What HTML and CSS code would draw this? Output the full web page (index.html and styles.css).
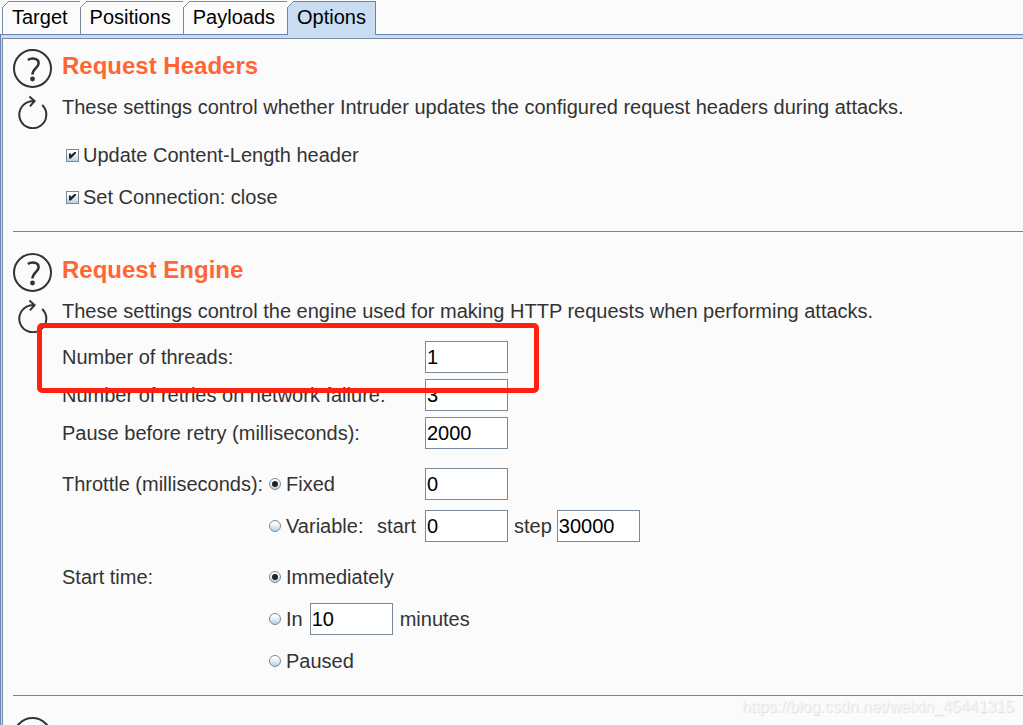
FILE: index.html
```html
<!DOCTYPE html>
<html lang="en">

<head>
    <meta charset="UTF-8">
    <meta name="viewport" content="width=device-width, initial-scale=1.0">
    <title>Intruder - Options</title>
    <link rel="stylesheet" href="styles.css">
</head>
<body>
<svg class="defs" aria-hidden="true">
    <symbol id="help" viewBox="0 0 39 39">
        <circle cx="19.5" cy="19.5" r="18.5"/>
        <path class="hook" d="M14.8 11C18 9 25.6 8.4 25.6 14.2C25.6 19 19.5 19.4 19.5 25.6"/>
        <circle class="dot" cx="19.5" cy="30" r="2.4"/>
    </symbol>
    <symbol id="reset" viewBox="0 0 30 34">
        <path d="M24.2 10A13.5 13.5 0 1 1 11.5 6.6L16 6"/>
        <path d="M11.4 1.4L16.6 6L12 11.4"/>
    </symbol>
</svg>

<nav class="tabs">
    <button type="button" class="tab">Target</button>
    <button type="button" class="tab">Positions</button>
    <button type="button" class="tab">Payloads</button>
    <button type="button" class="tab active">Options</button>
</nav>

<main class="panel">
    <section class="block">
        <div class="icons">
            <button type="button" class="icon" aria-label="Help"><svg class="help"><use href="#help"/></svg></button>
            <button type="button" class="icon" aria-label="Reset"><svg class="reset"><use href="#reset"/></svg></button>
        </div>
        <div class="content">
            <h2>Request Headers</h2>
            <p>These settings control whether Intruder updates the configured request headers during attacks.</p>
            <div class="checks">
                <label class="check"><input type="checkbox" checked>Update Content-Length header</label>
                <label class="check"><input type="checkbox" checked>Set Connection: close</label>
            </div>
        </div>
    </section>

    <section class="block">
        <div class="icons">
            <button type="button" class="icon" aria-label="Help"><svg class="help"><use href="#help"/></svg></button>
            <button type="button" class="icon" aria-label="Reset"><svg class="reset"><use href="#reset"/></svg></button>
        </div>
        <div class="content">
            <h2>Request Engine</h2>
            <p>These settings control the engine used for making HTTP requests when performing attacks.</p>
            <form class="engine">
                <div class="group tight">
                    <div class="row">
                        <label class="wide" for="threads">Number of threads:</label>
                        <input type="text" id="threads" value="1">
                    </div>
                    <div class="row">
                        <label class="wide" for="retries">Number of retries on network failure:</label>
                        <input type="text" id="retries" value="3">
                    </div>
                    <div class="row">
                        <label class="wide" for="pause">Pause before retry (milliseconds):</label>
                        <input type="text" id="pause" value="2000">
                    </div>
                </div>
                <div class="group">
                    <div class="row">
                        <span>Throttle (milliseconds):</span>
                        <label class="radio"><input type="radio" name="throttle" checked>Fixed</label>
                        <input type="text" aria-label="Fixed throttle" value="0">
                    </div>
                    <div class="row">
                        <div class="variable">
                            <label class="radio"><input type="radio" name="throttle">Variable:</label>
                            <label for="start">start</label>
                        </div>
                        <input type="text" id="start" value="0">
                        <div class="step">
                            <label for="step">step</label>
                            <input type="text" id="step" value="30000">
                        </div>
                    </div>
                </div>
                <div class="group">
                    <div class="row">
                        <span>Start time:</span>
                        <label class="radio"><input type="radio" name="time" checked>Immediately</label>
                    </div>
                    <div class="row">
                        <div class="delay">
                            <label class="radio"><input type="radio" name="time">In</label>
                            <input type="text" id="minutes" value="10">
                            <label for="minutes">minutes</label>
                        </div>
                    </div>
                    <div class="row">
                        <label class="radio"><input type="radio" name="time">Paused</label>
                    </div>
                </div>
                <div class="mark"></div>
            </form>
        </div>
    </section>

    <section class="block">
        <div class="icons">
            <button type="button" class="icon" aria-label="Help"><svg class="help"><use href="#help"/></svg></button>
        </div>
    </section>
</main>
<div class="watermark">https://blog.csdn.net/weixin_45441315</div>
</body>

</html>
```

FILE: styles.css
```css
*{
    box-sizing:border-box;
    margin:0;
    padding:0;
}
body{
    display:flex;
    flex-direction:column;
    height:100vh;
    overflow:hidden;
    background-color:#fbfbfb;
    color:#333;
    font-family:"Liberation Sans", Arial, sans-serif;
    font-size:20px;
    line-height:24px;
}
button, input{
    font:inherit;
}
.defs{
    position:absolute;
    width:0;
    height:0;
}

/* tabs */
.tabs{
    display:flex;
    flex:none;
    padding:1px 0 0 2px;
    border-bottom:1px solid #6382bf;
}
.tab{
    position:relative;
    height:33px;
    padding:0 12px 2px 9px;
    border:solid #7a8a99;
    border-width:1px 0 0 1px;
    background-color:#fbfbfb;
    color:#000;
}
.tab::before{
    content:"";
    position:absolute;
    top:-1px;
    left:-1px;
    width:7px;
    height:7px;
    background:linear-gradient(135deg, #fbfbfb 44%, #7a8a99 44%, #7a8a99 56%, transparent 56%);
}
.tab.active{
    height:34px;
    margin-bottom:-1px;
    padding:0 9px 3px 9px;
    border-color:#6382bf;
    border-right-width:1px;
    background-color:#c8ddf2;
}

/* panel */
.panel{
    flex:1;
    min-height:0;
    overflow:hidden;
    border-left:1px solid #6382bf;
    background-color:#fbfbfb;
    box-shadow:inset 1px 3px #c8ddf2, inset 2px 4px #7a8a99;
    padding:4px 0 0 12px;
}
.block{
    display:flex;
    gap:10px;
    padding:21px 0 18px;
    border-bottom:1px solid #6382bf;
}
.block:first-child{
    padding-top:10px;
}
.icons{
    display:flex;
    flex:none;
    flex-direction:column;
    align-items:center;
    gap:7px;
    width:39px;
}
.icon{
    display:block;
    border:0;
    background:none;
}
.icon svg{
    display:block;
    fill:none;
    stroke:#333;
    stroke-width:2;
}
.help{
    width:39px;
    height:39px;
}
.reset{
    width:30px;
    height:34px;
}
.hook{
    stroke-width:2.6;
}
.dot{
    fill:#333;
    stroke:none;
}
h2{
    padding-top:2px;
    color:#ff6633;
    font-size:24px;
    line-height:30px;
}
p{
    padding-top:14px;
}

/* request headers */
.checks{
    display:grid;
    gap:10px;
    margin-top:20px;
    padding-left:4px;
}
.check, .radio{
    display:flex;
    align-items:center;
    height:32px;
}
.check{
    gap:4px;
}
.check input, .radio input{
    display:grid;
    place-items:center;
    flex:none;
    appearance:none;
    border:1px solid #7a8a99;
    background:linear-gradient(#fff 20%, #b8cfe5);
}
.check input{
    width:13px;
    height:13px;
}
.check input:checked::after{
    content:"";
    width:7px;
    height:7px;
    background-color:#222;
    clip-path:polygon(0 28%, 28% 28%, 28% 50%, 86% 0, 100% 0, 100% 25%, 28% 100%, 0 100%);
}

/* request engine */
.engine{
    position:relative;
    display:grid;
    gap:19px;
    margin-top:18px;
}
.group{
    display:grid;
    gap:10px;
}
.tight{
    gap:6px;
}
.row{
    display:grid;
    grid-template-columns:206px 157px 83px auto;
    align-items:center;
    min-height:32px;
}
.wide{
    grid-column:span 2;
}
.radio, .variable, .delay{
    grid-column-start:2;
}
.radio{
    gap:5px;
    padding-left:1px;
}
.radio input{
    width:12px;
    height:12px;
    border-radius:50%;
}
.radio input:checked::after{
    content:"";
    width:6px;
    height:6px;
    border-radius:50%;
    background-color:#222;
}
input[type=text]{
    width:83px;
    height:32px;
    padding:0 1px;
    border:1px solid #7a8a99;
    background-color:#fff;
    color:#000;
}
.variable{
    display:flex;
    align-items:center;
    justify-content:space-between;
    padding-right:9px;
}
.step{
    display:flex;
    align-items:center;
    gap:5px;
    padding-left:6px;
}
.delay{
    display:flex;
    grid-column-end:-1;
    align-items:center;
    gap:7px;
}
.mark{
    position:absolute;
    top:-18px;
    left:-25px;
    width:502px;
    height:70px;
    border:5px solid #ff2010;
    border-radius:5px;
    pointer-events:none;
}
.watermark{
    position:absolute;
    right:9px;
    bottom:6px;
    color:#f6f6f6;
    font-size:16px;
    text-shadow:1px 1px 1px #ddd;
}
```
